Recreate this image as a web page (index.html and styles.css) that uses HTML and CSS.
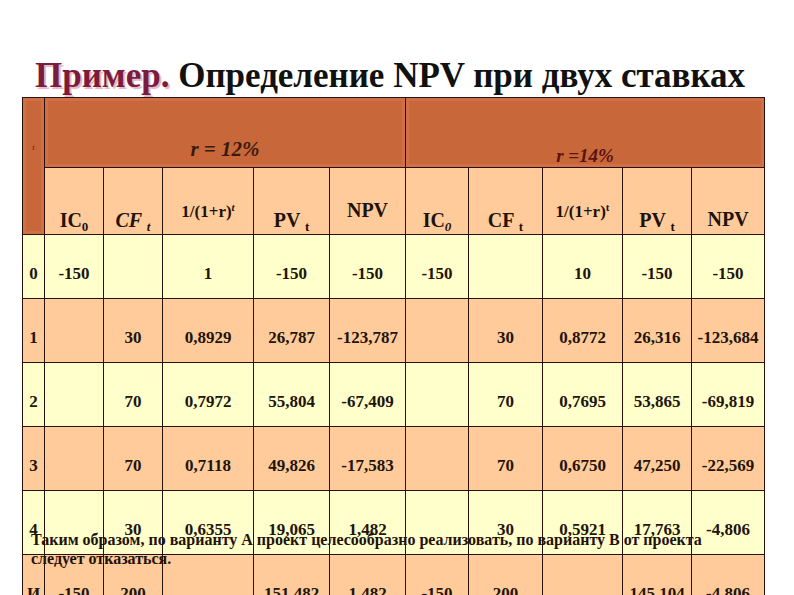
FILE: index.html
```html
<!DOCTYPE html>
<html lang="ru">
<head>
<meta charset="utf-8">
<title>Пример. Определение NPV при двух ставках</title>
<link rel="stylesheet" href="styles.css">
</head>
<body>
<div class="slide">
  <h1 class="title"><span class="accent">Пример.</span> Определение NPV при двух ставках</h1>
  <table class="npv">
    <colgroup>
      <col class="c-t"><col class="c-ic"><col class="c-cf"><col class="c-k"><col class="c-pv"><col class="c-npv">
      <col class="c-ic2"><col class="c-cf2"><col class="c-k2"><col class="c-pv2"><col class="c-npv2">
    </colgroup>
    <thead>
      <tr class="h1row">
        <th class="dark tcell" rowspan="2"><span class="tlabel">t</span></th>
        <th class="dark rate" colspan="5"><i>r</i> = 12%</th>
        <th class="dark rate2" colspan="5"><i>r</i> =14%</th>
      </tr>
      <tr class="h2row">
        <th class="hb big">IC<sub>0</sub></th>
        <th class="hb big it">CF <sub>t</sub></th>
        <th class="hb high small">1/(1+r)<sup class="it">t</sup></th>
        <th class="hb big">PV <sub>t</sub></th>
        <th class="hb high big">NPV</th>
        <th class="hb big">IC<sub class="it">0</sub></th>
        <th class="hb big">CF <sub>t</sub></th>
        <th class="hb high small">1/(1+r)<sup>t</sup></th>
        <th class="hb big">PV <sub>t</sub></th>
        <th class="hb mid big">NPV</th>
      </tr>
    </thead>
    <tbody>
      <tr class="yellow">
        <td>0</td><td>-150</td><td></td><td>1</td><td>-150</td><td>-150</td>
        <td>-150</td><td></td><td>10</td><td>-150</td><td>-150</td>
      </tr>
      <tr class="peach">
        <td>1</td><td></td><td>30</td><td>0,8929</td><td>26,787</td><td>-123,787</td>
        <td></td><td>30</td><td>0,8772</td><td>26,316</td><td>-123,684</td>
      </tr>
      <tr class="yellow">
        <td>2</td><td></td><td>70</td><td>0,7972</td><td>55,804</td><td>-67,409</td>
        <td></td><td>70</td><td>0,7695</td><td>53,865</td><td>-69,819</td>
      </tr>
      <tr class="peach">
        <td>3</td><td></td><td>70</td><td>0,7118</td><td>49,826</td><td>-17,583</td>
        <td></td><td>70</td><td>0,6750</td><td>47,250</td><td>-22,569</td>
      </tr>
      <tr class="yellow">
        <td>4</td><td></td><td>30</td><td>0,6355</td><td>19,065</td><td>1,482</td>
        <td></td><td>30</td><td>0,5921</td><td>17,763</td><td>-4,806</td>
      </tr>
      <tr class="peach">
        <td>И</td><td>-150</td><td>200</td><td></td><td>151,482</td><td>1,482</td>
        <td>-150</td><td>200</td><td></td><td>145,104</td><td>-4,806</td>
      </tr>
    </tbody>
  </table>
  <p class="note">Таким образом, по варианту А проект целесообразно реализовать, по варианту В от проекта следует отказаться.</p>
</div>
</body>
</html>
```
FILE: styles.css
```css
html, body {
  margin: 0;
  padding: 0;
  background: #ffffff;
  overflow: hidden;
}

.slide {
  position: relative;
  width: 794px;
  height: 595px;
  overflow: hidden;
  padding-top: 58px;
  box-sizing: border-box;
  font-family: "Liberation Serif", "Times New Roman", serif;
  color: #1e120a;
}

.title {
  margin: 0 0 4px 0;
  padding-left: 35px;
  height: 35px;
  font-size: 35px;
  line-height: 35px;
  font-weight: bold;
  color: #111111;
  white-space: nowrap;
}

.accent {
  color: #7c1c3c;
  text-shadow: 2px 2px 0 #e6b8c8;
}

.npv {
  margin-left: 22px;
  width: 742px;
  border-collapse: collapse;
  table-layout: fixed;
  font-family: "Liberation Serif", "Times New Roman", serif;
}

.c-t { width: 22px; }
.c-ic { width: 59px; }
.c-cf { width: 59px; }
.c-k { width: 91px; }
.c-pv { width: 76px; }
.c-npv { width: 76px; }
.c-ic2 { width: 63px; }
.c-cf2 { width: 74px; }
.c-k2 { width: 80px; }
.c-pv2 { width: 69px; }
.c-npv2 { width: 73px; }

.npv th,
.npv td {
  border: 1px solid #2a120a;
  padding: 0;
  text-align: center;
  white-space: nowrap;
  overflow: visible;
}

.h1row { height: 70px; }
.h2row { height: 67px; }

.dark {
  background: #c8673a;
  box-shadow: inset 0 0 0 3px #cf7048;
}

.tcell {
  vertical-align: top;
}

.tlabel {
  display: inline-block;
  font-size: 9px;
  font-style: italic;
  font-weight: normal;
  color: #7a1a10;
  padding-top: 44px;
}

.rate {
  vertical-align: bottom;
  padding-bottom: 5px !important;
  font-size: 21px;
  font-style: italic;
  font-weight: bold;
  color: #3a1a0e;
}

.rate2 {
  vertical-align: bottom;
  padding-bottom: 0 !important;
  font-size: 19px;
  font-style: italic;
  font-weight: bold;
  color: #5a1410;
}

.hb {
  background: #ffcb9a;
  vertical-align: bottom;
  padding-bottom: 2px !important;
  font-weight: bold;
  color: #1e120a;
}

.big { font-size: 20px; }
.small { font-size: 17px; }
.it { font-style: italic; }

.hb sub {
  font-size: 13px;
  vertical-align: -4px;
  line-height: 0;
}

.hb sup {
  font-size: 11px;
  vertical-align: 6px;
  line-height: 0;
}

.high {
  vertical-align: top;
  padding-top: 34px !important;
  padding-bottom: 0 !important;
}

.hb.big.high {
  padding-top: 31px !important;
}

.mid {
  vertical-align: top;
  padding-top: 40px !important;
  padding-bottom: 0 !important;
}

.npv tbody tr { height: 64px; }

.npv tbody td {
  vertical-align: top;
  padding-top: 29px;
  font-size: 17px;
  line-height: 20px;
  font-weight: bold;
  color: #22140a;
}

.yellow td { background: #ffffcc; }
.peach td { background: #ffcb9a; }

.note {
  position: absolute;
  left: 31px;
  top: 530px;
  width: 690px;
  margin: 0;
  font-size: 16px;
  line-height: 19px;
  font-weight: bold;
  color: #1e120a;
}
```
